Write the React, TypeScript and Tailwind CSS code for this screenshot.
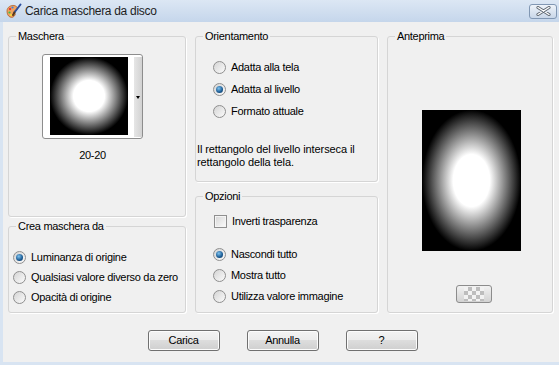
import React from 'react';

const Group = ({
  title,
  className,
  children,
}: {
  title: string;
  className?: string;
  children?: React.ReactNode;
}) => {
  return (
    <fieldset
      className={`min-w-0 rounded-[3px] border border-[#d5d5d5] shadow-[1px_1px_0_#ffffff] ${className ?? ''}`}
    >
      <legend className="ml-[7px] px-[2px] text-[11px] leading-[13px]">{title}</legend>
      {children}
    </fieldset>
  );
};

const Radio = ({ label, checked }: { label: string; checked?: boolean }) => {
  return (
    <div className="flex items-center gap-[5px]">
      <span className="flex h-[13px] w-[13px] items-center justify-center rounded-full border border-[#8f8f8f] bg-[linear-gradient(135deg,#d4d4d4,#fbfbfb)]">
        {checked && (
          <span className="h-[7px] w-[7px] rounded-full bg-[radial-gradient(circle_at_40%_35%,#7fc3f0,#1a5a92_60%,#0b2f55)]" />
        )}
      </span>
      <span>{label}</span>
    </div>
  );
};

const Button = ({ children }: { children: React.ReactNode }) => {
  return (
    <button className="h-[21px] w-[72px] rounded-[3px] border border-[#707070] bg-[linear-gradient(#f3f3f3_0%,#ebebeb_50%,#dddddd_50%,#cfcfcf_100%)] text-[11px] shadow-[inset_0_0_0_1px_#fcfcfc]">
      {children}
    </button>
  );
};

const AppIcon = () => (
  <svg width="17" height="17" viewBox="0 0 17 17">
    <path d="M2 8c0-4 4-6 7-5.5 3 .5 4 2.5 3 4-1 1.5-3 .5-3 2s2 2 1 3.5C9 14 7 15 5 14 3 13 2 11 2 8z" fill="#f0a35e" stroke="#b0602a" strokeWidth="0.8" />
    <circle cx="5" cy="6" r="1.2" fill="#e23b3b" />
    <circle cx="7.5" cy="4.5" r="1.1" fill="#3b7de2" />
    <circle cx="4.5" cy="9.5" r="1.1" fill="#3bbf4a" />
    <circle cx="6" cy="12" r="1" fill="#f5e23b" />
    <path d="M15.5 1.5L9 10" stroke="#2c4f9e" strokeWidth="2" strokeLinecap="round" />
    <path d="M9.5 9.5l-1.5 2.5" stroke="#5a3a1a" strokeWidth="2" strokeLinecap="round" />
  </svg>
);

export default function App() {
  return (
    <div className="flex h-[365px] w-[559px] flex-col bg-[#f0f0f0] font-['Liberation_Sans',Arial,sans-serif] text-black">
      <div className="flex h-[22px] shrink-0 items-center bg-[linear-gradient(#dce7f4,#c5d6eb)] pl-[5px] pr-[2px]">
        <AppIcon />
        <span className="ml-[3px] text-[12px] tracking-[-0.3px] text-[#1e1e1e]">Carica maschera da disco</span>
        <div className="ml-auto flex h-[15px] w-[28px] items-center justify-center rounded-[3px] border border-[#8197b3] bg-[linear-gradient(#eef3f9,#c9d7e9)]">
          <svg width="15" height="10" viewBox="0 0 15 10">
            <path d="M2 1.5L13 8.5M13 1.5L2 8.5" stroke="#5d6670" strokeWidth="3.2" strokeLinecap="round" />
            <path d="M2 1.5L13 8.5M13 1.5L2 8.5" stroke="#ffffff" strokeWidth="1.4" strokeLinecap="round" />
          </svg>
        </div>
      </div>

      <div className="flex flex-1 flex-col border-b-[3px] border-l-[3px] border-[#d8e4f2] pl-[5px] pt-[8px] text-[11px] leading-[13px] tracking-[-0.3px]">
        <div className="grid grid-cols-[178px_183px_166px] gap-x-[9px]">
          <div className="flex flex-col gap-[3px]">
            <Group title="Maschera" className="h-[187px]">
              <div className="ml-[33px] mt-[11px] w-[101px]">
                <div className="flex h-[85px] w-[101px] rounded-[3px] border border-[#8d8d8d] bg-white pl-[7px] pt-[2px]">
                  <div className="h-[78px] w-[78px] bg-[radial-gradient(circle_closest-side,#ffffff_40%,#000000_100%)]" />
                  <div className="ml-[6px] flex h-[80px] w-[8px] items-center justify-center bg-[linear-gradient(90deg,#e6e6e6,#d2d2d2)]">
                    <div className="h-0 w-0 border-x-[2.5px] border-t-[3px] border-x-transparent border-t-black" />
                  </div>
                </div>
                <div className="mt-[10px] text-center">20-20</div>
              </div>
            </Group>
            <Group title="Crea maschera da" className="h-[93px]">
              <div className="ml-[4px] mt-[14px] flex flex-col">
                <div className="flex h-[20px] items-center">
                  <Radio label="Luminanza di origine" checked />
                </div>
                <div className="flex h-[20px] items-center">
                  <Radio label="Qualsiasi valore diverso da zero" />
                </div>
                <div className="flex h-[20px] items-center">
                  <Radio label="Opacità di origine" />
                </div>
              </div>
            </Group>
          </div>

          <div className="flex flex-col gap-[8px]">
            <Group title="Orientamento" className="h-[152px]">
              <div className="ml-[17px] mt-[13px] flex flex-col">
                <div className="flex h-[22px] items-center">
                  <Radio label="Adatta alla tela" />
                </div>
                <div className="flex h-[22px] items-center">
                  <Radio label="Adatta al livello" checked />
                </div>
                <div className="flex h-[22px] items-center">
                  <Radio label="Formato attuale" />
                </div>
              </div>
              <p className="ml-[1px] mt-[21px] tracking-[-0.1px]">
                Il rettangolo del livello interseca il
                <br />
                rettangolo della tela.
              </p>
            </Group>
            <Group title="Opzioni" className="h-[123px]">
              <div className="ml-[18px] mt-[8px] flex h-[20px] items-center gap-[5px]">
                <span className="h-[13px] w-[13px] border border-[#8f8f8f] bg-[linear-gradient(135deg,#d6d6d6,#fbfbfb)] shadow-[inset_0_0_0_1px_#f4f4f4]" />
                <span>Inverti trasparenza</span>
              </div>
              <div className="ml-[17px] mt-[13px] flex flex-col">
                <div className="flex h-[21px] items-center">
                  <Radio label="Nascondi tutto" checked />
                </div>
                <div className="flex h-[21px] items-center">
                  <Radio label="Mostra tutto" />
                </div>
                <div className="flex h-[21px] items-center">
                  <Radio label="Utilizza valore immagine" />
                </div>
              </div>
            </Group>
          </div>

          <Group title="Anteprima" className="h-[283px]">
            <div className="ml-[34px] mt-[67px] h-[141px] w-[99px] bg-[radial-gradient(ellipse_closest-side,#ffffff_37%,#000000_100%)]" />
            <div className="ml-[68px] mt-[34px] flex h-[18px] w-[36px] items-center justify-center rounded-[3px] border border-[#8c8c8c] bg-[linear-gradient(#f2f2f2,#d2d2d2)]">
              <span className="h-[14px] w-[20px] bg-[repeating-conic-gradient(#bdbdbd_0_25%,#f2f2f2_0_50%)] bg-[length:8px_8px]" />
            </div>
          </Group>
        </div>

        <div className="mt-[17px] flex justify-center gap-[27px] pr-[2px]">
          <Button>Carica</Button>
          <Button>Annulla</Button>
          <Button>?</Button>
        </div>
      </div>
    </div>
  );
}
